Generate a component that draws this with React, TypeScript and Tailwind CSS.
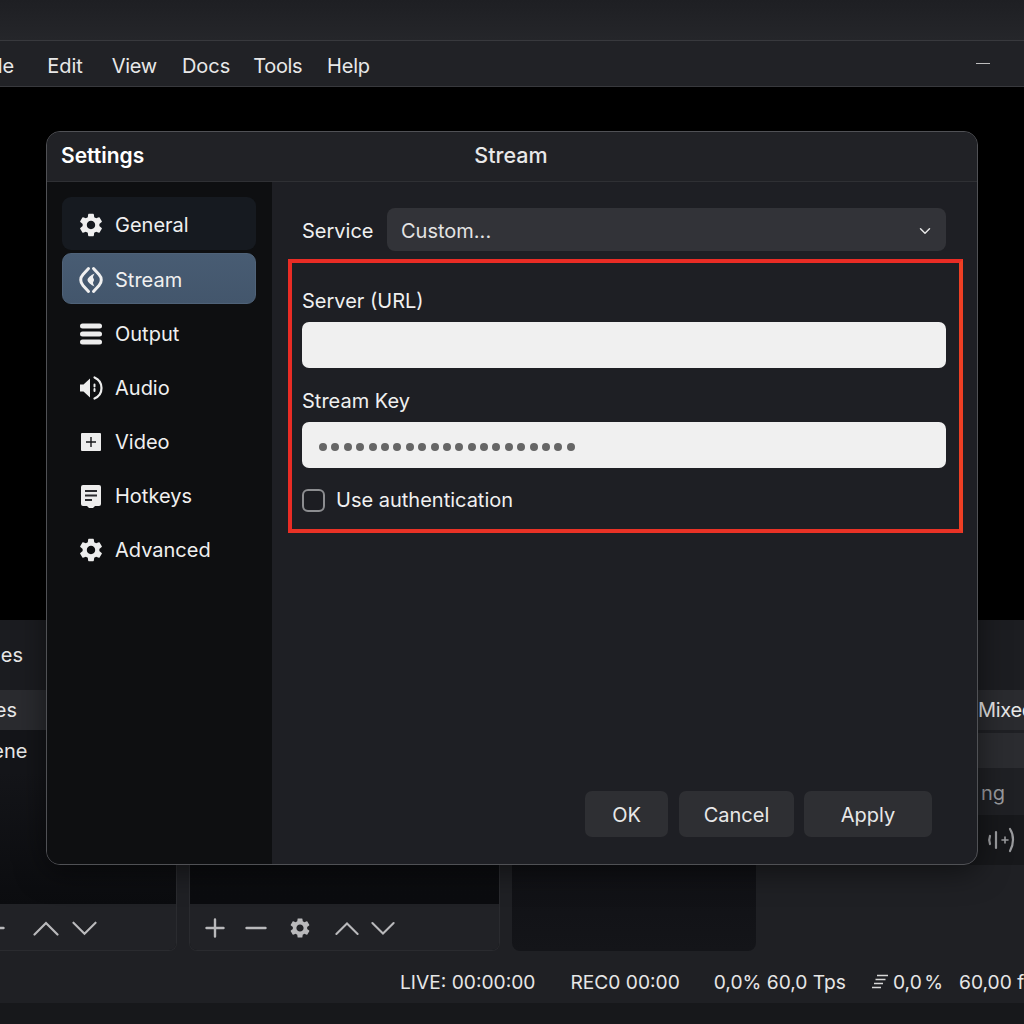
import { ChevronDown } from "lucide-react";

const gearPath =
  "M19.14 12.94c.04-.3.06-.61.06-.94 0-.32-.02-.64-.07-.94l2.03-1.58a.49.49 0 0 0 .12-.61l-1.92-3.32a.488.488 0 0 0-.59-.22l-2.39.96c-.5-.38-1.03-.7-1.62-.94l-.36-2.54a.484.484 0 0 0-.48-.41h-3.84c-.24 0-.43.17-.47.41l-.36 2.54c-.59.24-1.13.57-1.62.94l-2.39-.96c-.22-.08-.47 0-.59.22L2.74 8.87c-.12.21-.08.47.12.61l2.03 1.58c-.05.3-.09.63-.09.94s.02.64.07.94l-2.03 1.58a.49.49 0 0 0-.12.61l1.92 3.32c.12.22.37.29.59.22l2.39-.96c.5.38 1.03.7 1.62.94l.36 2.54c.05.24.24.41.48.41h3.84c.24 0 .44-.17.47-.41l.36-2.54c.59-.24 1.13-.56 1.62-.94l2.39.96c.22.08.47 0 .59-.22l1.92-3.32c.12-.22.07-.47-.12-.61l-2.01-1.58zM12 15.6c-1.98 0-3.6-1.62-3.6-3.6s1.62-3.6 3.6-3.6 3.6 1.62 3.6 3.6-1.62 3.6-3.6 3.6z";

function GearIcon({ size = 28 }: { size?: number }) {
  return (
    <svg width={size} height={size} viewBox="0 0 24 24" fill="currentColor">
      <path d={gearPath} />
    </svg>
  );
}

function StreamIcon() {
  return (
    <svg width="28" height="28" viewBox="0 0 28 28" fill="none" stroke="currentColor">
      <path d="M11.500 2.500 6 8.500c-3 3.200-3 7.800 0 11l5.500 6" strokeWidth="3" strokeLinecap="round" />
      <path d="M16.500 2.500 22 8.500c3 3.200 3 7.800 0 11l-5.500 6" strokeWidth="3" strokeLinecap="round" />
      <path d="M17.500 7.500c-3.500 1.500-7 4.500-7 6.500s3.500 5 7 6.500c-.8-1.600-1.500-3-1.500-3.800 0-.8 1-1.400 1-2.700s-1-1.900-1-2.700c0-.8.700-2.200 1.500-3.800z" fill="currentColor" stroke="none" />
    </svg>
  );
}

function OutputIcon() {
  return (
    <svg width="28" height="28" viewBox="0 0 28 28" fill="currentColor">
      <rect x="3" y="3.500" width="22" height="5" rx="2.500" />
      <rect x="3" y="11.500" width="22" height="5" rx="2.500" />
      <rect x="3" y="19.500" width="22" height="5" rx="2.500" />
    </svg>
  );
}

function AudioIcon() {
  return (
    <svg width="28" height="28" viewBox="0 0 28 28" fill="none">
      <path d="M3 10.500h3.500L13 4.500v19l-6.500-6H3z" fill="currentColor" />
      <path d="M17.500 3.500c4.500 2 7 6 7 10.500s-2.500 8.500-7 10.500" stroke="currentColor" strokeWidth="2.200" strokeLinecap="round" />
      <path d="M17.500 10.500v2M17.500 15v2" stroke="currentColor" strokeWidth="2" strokeLinecap="round" />
    </svg>
  );
}

function VideoIcon() {
  return (
    <svg width="28" height="28" viewBox="0 0 28 28">
      <rect x="4" y="5" width="20" height="18" fill="#ededed" rx="1" />
      <path d="M14 9v10M9 14h10" stroke="#17181b" strokeWidth="1.400" />
    </svg>
  );
}

function HotkeysIcon() {
  return (
    <svg width="28" height="28" viewBox="0 0 28 28">
      <path d="M6 3h16a2 2 0 0 1 2 2v17a2 2 0 0 1-2 2h-4l-2 2h-4l-2-2H6a2 2 0 0 1-2-2V5a2 2 0 0 1 2-2z" fill="#ededed" />
      <path d="M8 9h12M8 13.500h12M8 18h7" stroke="#2a2b2e" strokeWidth="1.800" />
    </svg>
  );
}

function ToolPlus() {
  return (
    <svg width="20" height="20" viewBox="0 0 20 20" fill="none" stroke="currentColor" strokeWidth="2.400" strokeLinecap="round">
      <path d="M10 1.500v17M1.500 10h17" />
    </svg>
  );
}

function ToolMinus() {
  return (
    <svg width="22" height="4" viewBox="0 0 22 4" fill="none" stroke="currentColor" strokeWidth="2.400" strokeLinecap="round">
      <path d="M1.500 2h19" />
    </svg>
  );
}

function ChevronUpIcon({ width = 26 }: { width?: number }) {
  return (
    <svg width={width} height="15" viewBox="0 0 26 15" fill="none" stroke="currentColor" strokeWidth="2.200" strokeLinecap="round">
      <path d="M1.500 13.500 13 2l11.500 11.500" />
    </svg>
  );
}

function ChevronDownIcon({ width = 26 }: { width?: number }) {
  return (
    <svg width={width} height="15" viewBox="0 0 26 15" fill="none" stroke="currentColor" strokeWidth="2.200" strokeLinecap="round">
      <path d="M1.500 1.500 13 13 24.500 1.500" />
    </svg>
  );
}

function MixerIcon() {
  return (
    <svg width="30" height="30" viewBox="0 0 30 30" fill="none" stroke="#9a9b9e" strokeWidth="2.200" strokeLinecap="round">
      <path d="M4 11c-1 2.500-1 5.500 0 8" />
      <path d="M10 7v16" />
      <path d="M16 15h6M19 12v6" strokeWidth="1.600" />
      <path d="M24 4c4 6 4 15 0 22" />
    </svg>
  );
}

const navItems = [
  { label: "Output", icon: <OutputIcon /> },
  { label: "Audio", icon: <AudioIcon /> },
  { label: "Video", icon: <VideoIcon /> },
  { label: "Hotkeys", icon: <HotkeysIcon /> },
  { label: "Advanced", icon: <GearIcon /> },
];

const dots = Array.from({ length: 21 });

function SettingsDialog() {
  return (
    <div className="absolute left-[46px] top-[131px] flex h-[734px] w-[932px] flex-col overflow-hidden rounded-[14px] border border-[#505155] bg-[#1e1f24] text-[#f0f0f0] shadow-[0_6px_30px_rgba(0,0,0,0.5)]">
      <div className="relative flex h-[50px] shrink-0 items-center justify-center border-b border-[#2f3034] bg-[#212226] pb-[2px]">
        <span className="absolute left-[14px] text-[21px] font-semibold text-white">Settings</span>
        <span className="-ml-[2px] text-[21.500px] font-medium text-[#e8e8e8]">Stream</span>
      </div>
      <div className="flex min-h-0 flex-1">
        <nav className="w-[225px] shrink-0 bg-[#0e0f11] pl-[15px] pr-[16px] pt-[15px]">
          <div className="mb-[3px] flex h-[53px] items-center gap-[10px] rounded-[9px] bg-[#161a20] pl-[15px] pt-[2px] text-[20px]">
            <GearIcon />
            <span>General</span>
          </div>
          <div className="mb-[3px] flex h-[51px] items-center gap-[10px] rounded-[9px] border border-[#4f6278] bg-gradient-to-b from-[#485c73] to-[#43566c] pl-[14px] pt-[2px] text-[20px]">
            <StreamIcon />
            <span>Stream</span>
          </div>
          {navItems.map((item) => (
            <div key={item.label} className="flex h-[54px] items-center gap-[10px] pl-[15px] text-[20px]">
              <span className="text-[#ededed]">{item.icon}</span>
              <span>{item.label}</span>
            </div>
          ))}
        </nav>
        <div className="flex min-w-0 flex-1 flex-col pl-[16px] pr-[14px] pt-[26px] pb-[27px]">
          <div className="flex h-[43px] items-center pl-[14px] pr-[17px]">
            <span className="w-[85px] pt-[2px] text-[20px]">Service</span>
            <div className="flex h-full flex-1 items-center justify-between rounded-[8px] bg-[#323338] pl-[14px] pr-[12px] pt-[2px] text-[20px] text-[#e4e4e4]">
              <span>Custom...</span>
              <ChevronDown size={18} strokeWidth={2} />
            </div>
          </div>
          <div className="mt-[8px] h-[274px] border-4 border-[#e92c25] border-b-[#e93226] border-r-[#ee3f24] pl-[10px] pr-[13px] pt-[24px]">
            <div className="text-[20px] leading-[28px]">Server (URL)</div>
            <div className="mt-[7px] h-[46px] rounded-[7px] bg-[#f0f0f0]" />
            <div className="mt-[19px] text-[20px] leading-[28px]">Stream Key</div>
            <div className="mt-[7px] flex h-[46px] items-center gap-[4.400px] rounded-[7px] bg-[#f0f0f0] pl-[17px] pt-[3px]">
              {dots.map((_, i) => (
                <span key={i} className="h-[8px] w-[8px] rounded-full bg-[#666666]" />
              ))}
            </div>
            <div className="mt-[17px] flex items-center gap-[11px]">
              <span className="h-[23px] w-[23px] rounded-[6px] border-2 border-[#8c8d90] bg-[#1c1d22]" />
              <span className="text-[20px]">Use authentication</span>
            </div>
          </div>
          <div className="mt-auto flex justify-end pr-[31px] text-[20px] text-[#e8e8e8]">
            <button className="h-[46px] w-[83px] rounded-[7px] bg-[#2e2f33] pt-[2px]">OK</button>
            <button className="ml-[11px] h-[46px] w-[115px] rounded-[7px] bg-[#2e2f33] pt-[2px]">Cancel</button>
            <button className="ml-[10px] h-[46px] w-[128px] rounded-[7px] bg-[#2e2f33] pt-[2px]">Apply</button>
          </div>
        </div>
      </div>
    </div>
  );
}

export default function App() {
  return (
    <div
      className="relative flex h-[1024px] w-[1024px] flex-col overflow-hidden bg-[#1f2024] text-[#e8e8e8]"
      style={{ fontFamily: "Inter, 'Liberation Sans', sans-serif" }}
    >
      <div className="h-[40px] shrink-0 bg-gradient-to-b from-[#1e1f23] to-[#25262a]" />
      <div className="flex h-[47px] shrink-0 items-center justify-between border-y border-[#38393d] bg-[#212226] pr-[34px] pt-[5px] text-[20px]">
        <div className="-ml-[19px] flex items-center">
          <span>File</span>
          <span className="ml-[33px]">Edit</span>
          <span className="ml-[29px] tracking-[-0.3px]">View</span>
          <span className="ml-[25px]">Docs</span>
          <span className="ml-[23px] tracking-[-0.4px]">Tools</span>
          <span className="ml-[25px] tracking-[-0.2px]">Help</span>
        </div>
        <div className="mb-[5px] h-[1.500px] w-[14px] bg-[#bdbdbd]" />
      </div>
      <div className="h-[533px] shrink-0 bg-black" />

      <div className="flex h-[331px] shrink-0">
        <div className="flex w-[177px] shrink-0 flex-col overflow-hidden rounded-br-[8px] border-r border-b border-[#2a2b2f] bg-[#141519] text-[20px]">
          <div className="flex h-[70px] items-center bg-[#1b1c20]">
            <span className="-ml-[47px]">Scenes</span>
          </div>
          <div className="flex h-[40px] items-center bg-[#2a2b2f]">
            <span className="-ml-[53px]">Scenes</span>
          </div>
          <div className="flex h-[42px] items-center">
            <span className="-ml-[32px]">Scene</span>
          </div>
          <div className="flex-1 bg-gradient-to-b from-[#141519] to-[#0b0c0f]" />
          <div className="flex h-[46px] items-center bg-[#212226] pt-[2px] text-[#b9b9bb]">
            <span className="-ml-[17px]"><ToolMinus /></span>
            <span className="ml-[28px]"><ChevronUpIcon /></span>
            <span className="ml-[13px]"><ChevronDownIcon width={25} /></span>
          </div>
        </div>
        <div className="ml-[12px] flex w-[311px] shrink-0 flex-col overflow-hidden rounded-b-[8px] border-x border-b border-[#2a2b2f] bg-[#141519]">
          <div className="flex-1 bg-gradient-to-b from-[#0c0d10] to-[#0b0c0f]" />
          <div className="flex h-[46px] items-center bg-[#212226] pl-[15px] pt-[2px] text-[#b9b9bb]">
            <ToolPlus />
            <span className="ml-[20px]"><ToolMinus /></span>
            <span className="ml-[21px]"><GearIcon size={24} /></span>
            <span className="ml-[23px]"><ChevronUpIcon width={24} /></span>
            <span className="ml-[12px]"><ChevronDownIcon width={24} /></span>
          </div>
        </div>
        <div className="ml-[12px] w-[244px] shrink-0 rounded-b-[8px] bg-gradient-to-b from-[#050508] to-[#141519]" />
        <div className="ml-[12px] flex flex-1 flex-col overflow-hidden text-[20px]">
          <div className="h-[70px] bg-[#1c1d21]" />
          <div className="flex h-[40px] items-center whitespace-nowrap bg-[#2a2b2f] pl-[210px] tracking-[-0.3px]">Mixed</div>
          <div className="mt-[3px] h-[35px] bg-[#2b2c30]" />
          <div className="flex h-[47px] items-center justify-end bg-[#1f2024] pr-[19px] pt-[2px] text-[#9a9b9e]">ng</div>
          <div className="flex h-[50px] items-center justify-end bg-[#17181b] pr-[8px]">
            <MixerIcon />
          </div>
        </div>
      </div>

      <div className="flex h-[52px] shrink-0 items-center whitespace-nowrap pl-[400px] pt-[10px] text-[19.200px] text-[#e6e6e6]">
        <span>LIVE: 00:00:00</span>
        <span className="ml-[17px] h-[14px] w-px bg-[#bdbdbd]" />
        <span className="ml-[18px]">REC0 00:00</span>
        <span className="ml-[16px] h-[14px] w-px bg-[#bdbdbd]" />
        <span className="ml-[18px]">0,0% 60,0 Tps</span>
        <svg className="ml-[25px] shrink-0" width="18" height="16" viewBox="0 0 18 16" stroke="#d8d8d8" strokeWidth="1.400" fill="none">
          <path d="M6 1.500h11M4.500 5.500h10M3 9.500h9M1 13.500h9" />
        </svg>
        <span className="ml-[4px] [word-spacing:-3px]">0,0 %</span>
        <span className="ml-[16px]">60,00 fps</span>
      </div>
      <div className="flex-1 bg-[#17181b]" />

      <SettingsDialog />
    </div>
  );
}
